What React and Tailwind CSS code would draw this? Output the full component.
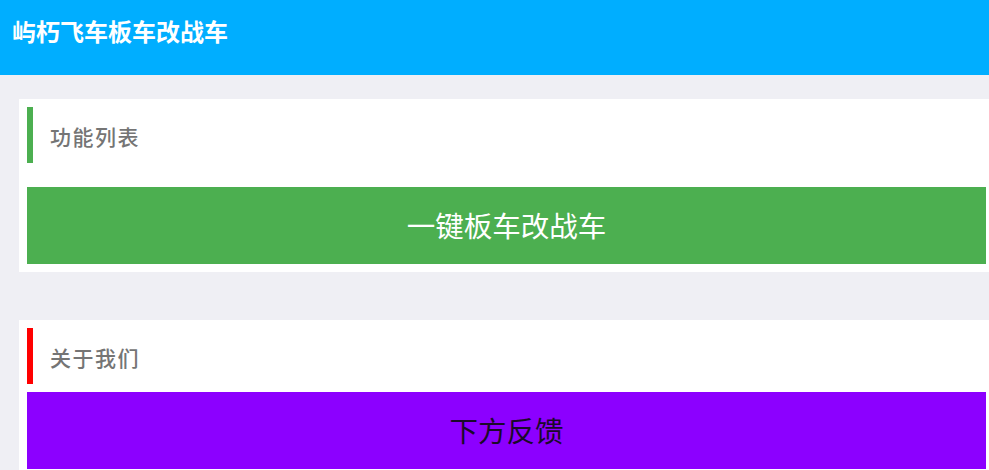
import React from "react";

const font = { fontFamily: '"Noto Sans CJK SC", "Noto Sans", sans-serif' };

function Section({ title, barColor, btnText, btnClass, gapClass }) {
  return (
    <div className="ml-[19px] w-[975px] shrink-0 bg-white p-[8px]">
      <div className="flex h-[56px] items-center">
        <div className={`h-full w-[6px] ${barColor}`} />
        <span className="ml-[17px] mt-[2px] text-[21px] font-medium leading-none tracking-[1.5px] text-[#757575]">
          {title}
        </span>
      </div>
      <div
        className={`${gapClass} flex h-[77px] items-center justify-center ${btnClass} text-[28.5px] leading-none`}
      >
        {btnText}
      </div>
    </div>
  );
}

export default function App() {
  return (
    <div className="h-[470px] w-[989px] overflow-hidden bg-[#efeff4]" style={font}>
      <div className="h-[75px] bg-[#00aeff] pl-[12px] pt-[15px]">
        <h1 className="text-[24px] font-bold leading-[32px] text-white">
          屿朽飞车板车改战车
        </h1>
      </div>
      <div className="flex flex-col pt-[24px]">
        <Section
          title="功能列表"
          barColor="bg-[#4caf50]"
          btnText="一键板车改战车"
          btnClass="bg-[#4caf50] text-white"
          gapClass="mt-[24px]"
        />
        <div className="h-[48px]" />
        <Section
          title="关于我们"
          barColor="bg-[#ff0000]"
          btnText="下方反馈"
          btnClass="bg-[#8c00ff] text-[#1a0a2a]"
          gapClass="mt-[8px]"
        />
      </div>
    </div>
  );
}
